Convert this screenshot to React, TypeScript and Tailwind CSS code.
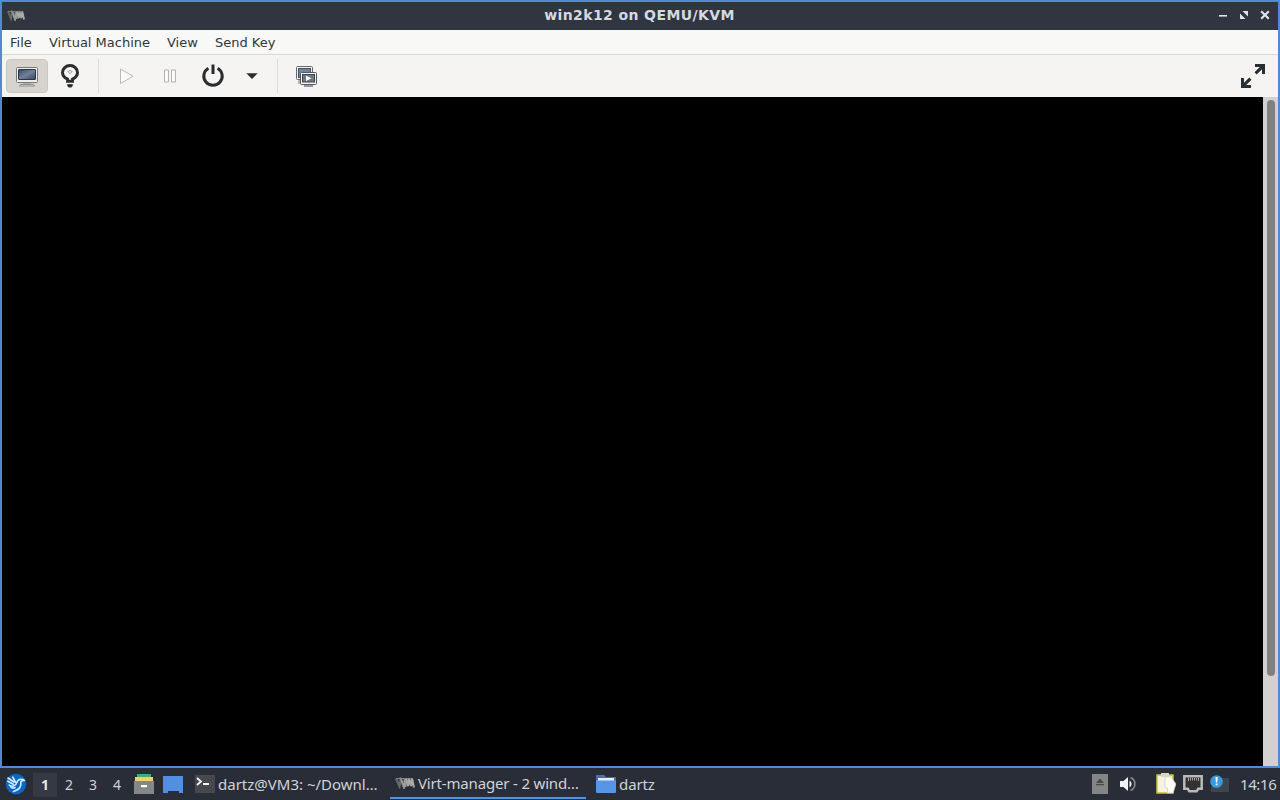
import type { ReactNode } from 'react'

const MENUS = [
  { label: 'File', cls: 'w-[39px]' },
  { label: 'Virtual Machine', cls: 'w-[118px]' },
  { label: 'View', cls: 'w-[48px]' },
  { label: 'Send Key', cls: 'w-[76px]' },
]

const DESKTOPS = ['1', '2', '3', '4']

function VmLogo({ className }: { className: string }) {
  return (
    <svg viewBox="0 0 20 12" className={className} fill="none">
      <path d="M1 1.5 L4.5 9.5 L5.5 2 L8.5 9.5 L9.5 2" stroke="#66686a" strokeWidth="2.2" />
      <path d="M6 2 L9 10 L10.5 2 V10" stroke="#9b9b99" strokeWidth="2" />
      <path d="M11 1.500 L13 9 L14 1.500 L16 9 L17 1.500 L19 10.500" stroke="#aaaaa7" strokeWidth="2" />
      <path d="M1 1.500 H18" stroke="#858685" strokeWidth="1" />
    </svg>
  )
}

function TitleBar() {
  return (
    <header className="flex h-[28px] shrink-0 items-center bg-[#30353f] pr-[8px] pl-[5px]">
      <div className="flex w-[54px] items-center pb-[2px]">
        <VmLogo className="h-[11px] w-[18px]" />
      </div>
      <h1 className="flex-1 pb-[2px] text-center text-[14px] leading-none font-bold tracking-[0.4px] text-[#d3dae3]">win2k12 on QEMU/KVM</h1>
      <div className="flex w-[52px] items-center justify-between pb-[2px]">
        <svg width="10" height="10" viewBox="0 0 10 10">
          <path d="M1 5h8v1.6H1z" fill="#dbe4ef" />
        </svg>
        <svg width="10" height="10" viewBox="0 0 10 10" fill="#dbe4ef">
          <path d="M3.500 1H9v5.500zM1 3.500V9h5.500z" />
        </svg>
        <svg width="10" height="10" viewBox="0 0 10 10">
          <path d="M1.200 1.200l7.600 7.600M8.800 1.200L1.200 8.800" stroke="#dbe4ef" strokeWidth="2.100" />
        </svg>
      </div>
    </header>
  )
}

function MenuBar() {
  return (
    <nav className="flex h-[25px] shrink-0 items-center border-b border-[#dcdad7] bg-[#f8f8f7] pl-[8px] text-[13px] text-[#30363a]">
      {MENUS.map((m) => (
        <button key={m.label} className={`${m.cls} shrink-0 text-left leading-none whitespace-nowrap`}>
          {m.label}
        </button>
      ))}
    </nav>
  )
}

function MonitorIcon() {
  return (
    <svg width="24" height="24" viewBox="0 0 24 24">
      <defs>
        <linearGradient id="screen" x1="0" y1="0" x2="1" y2="1">
          <stop offset="0" stopColor="#344765" />
          <stop offset="0.5" stopColor="#71819a" />
          <stop offset="1" stopColor="#33435c" />
        </linearGradient>
      </defs>
      <rect x="1.5" y="3.5" width="21" height="15" rx="1" fill="#eeeeec" stroke="#777975" />
      <rect x="3.5" y="5.5" width="17" height="10" rx=".5" fill="url(#screen)" stroke="#273449" />
      <path d="M8 19h8v1.500H8z" fill="#b4b5b1" />
      <path d="M5.500 20.500h13l1 1.500h-15z" fill="#e8e8e5" stroke="#777975" strokeWidth=".8" />
    </svg>
  )
}

function BulbIcon() {
  return (
    <svg width="24" height="26" viewBox="0 0 24 26" fill="none" stroke="#2a2e30">
      <path d="M9.500 18.200v-2C6.400 14.700 4.500 12.400 4.500 9.500a7.500 7 0 0 1 15 0c0 2.900-1.900 5.200-5 6.700v2z" strokeWidth="3" />
      <path d="M9.700 8.500l2.300 2.200 2.300-2.200-2.300-1z" stroke="#85888a" strokeWidth=".8" />
      <path d="M9.500 21.700h5l-1 2.300h-3z" fill="#2a2e30" strokeWidth="1" />
    </svg>
  )
}

function PowerIcon() {
  return (
    <svg width="24" height="24" viewBox="0 0 24 24" fill="none" stroke="#2a2e30" strokeWidth="3">
      <path d="M7.400 4.200a9.200 9.200 0 1 0 9.200 0M12 .4v9.600" />
    </svg>
  )
}

function SnapshotIcon() {
  return (
    <svg width="24" height="24" viewBox="0 0 24 24">
      <rect x="2.500" y="2.500" width="16" height="13" rx="1" fill="#f2f2f0" stroke="#626970" />
      <rect x="4.500" y="4.500" width="12" height="9" fill="#71839a" stroke="#465261" />
      <path d="M4 17h3M4 19h3" stroke="#73777a" />
      <rect x="6.500" y="8.500" width="16" height="12" rx="1" fill="#f2f2f0" stroke="#555b60" />
      <rect x="8.500" y="10.500" width="12" height="7.500" fill="#707a84" stroke="#3c4653" />
      <path d="M12 11.700l5.500 2.600-5.500 2.600z" fill="#fff" />
      <path d="M10 22h9" stroke="#77797b" strokeWidth="1.500" />
    </svg>
  )
}

function ToolBar() {
  return (
    <div className="flex h-[42px] shrink-0 items-center bg-[#f5f4f2]">
      <button className="ml-[4px] flex h-[34px] w-[42px] items-center justify-center rounded-[4px] border border-[#cdc7c2] bg-[#d7d3cf]">
        <MonitorIcon />
      </button>
      <button className="flex h-[34px] w-[44px] items-center justify-center">
        <BulbIcon />
      </button>
      <div className="ml-[6px] h-[34px] w-px bg-[#e0dedb]" />
      <button className="ml-[5px] flex h-[34px] w-[44px] items-center justify-center">
        <svg width="24" height="24" viewBox="0 0 24 24" fill="#fbfbfa" stroke="#bcbab7">
          <path d="M6.500 5v14.500L19 12.200z" />
        </svg>
      </button>
      <button className="flex h-[34px] w-[43px] items-center justify-center">
        <svg width="24" height="24" viewBox="0 0 24 24" fill="#fbfbfa" stroke="#b5b3b0">
          <path d="M6.500 6h4v12h-4zM13.500 6h4v12h-4z" />
        </svg>
      </button>
      <button className="flex h-[34px] w-[43px] items-center justify-center">
        <PowerIcon />
      </button>
      <button className="flex h-[34px] w-[36px] items-center justify-center">
        <svg width="12" height="6" viewBox="0 0 12 6">
          <path d="M.3.200h11.400L6 6z" fill="#2a2e30" />
        </svg>
      </button>
      <div className="ml-[7px] h-[34px] w-px bg-[#e0dedb]" />
      <button className="ml-[6px] flex h-[34px] w-[44px] items-center justify-center">
        <SnapshotIcon />
      </button>
      <button className="mr-[13px] ml-auto">
        <svg width="24" height="24" viewBox="0 0 24 24" fill="#2a2e30">
          <path d="M14 0h10v10h-3V5.200l-5.300 5.300-2.200-2.200L18.800 3H14zM0 14h3v4.800l5.300-5.300 2.200 2.200L5.200 21H10v3H0z" />
        </svg>
      </button>
    </div>
  )
}

function TaskItem({ icon, label, className }: { icon: ReactNode; label: string; className: string }) {
  return (
    <button className={`flex h-[30px] shrink-0 items-center whitespace-nowrap ${className}`}>
      {icon}
      <span>{label}</span>
    </button>
  )
}

function BirdIcon() {
  return (
    <svg width="22" height="22" viewBox="0 0 22 22">
      <circle cx="11" cy="11" r="10.300" fill="#0868c4" />
      <path
        d="M3 5l6 4M2.800 8.200l5.500 3M7.800 4.200l2.700 5M4.200 12c1.500 1.500 4 1.500 5.800.2 2-1.500 1.500-4.700 4.500-5.700 2-.6 3.500-.3 5 1-3-.3-4 .7-3.700 3 .5 4-2.300 6.500-7.300 8M5.500 13c.5 2 2.500 2.500 4.500 1.700"
        fill="none"
        stroke="#d9ecfb"
        strokeWidth="1.600"
        strokeLinecap="round"
        strokeLinejoin="round"
      />
    </svg>
  )
}

function FolderIcon() {
  return (
    <svg width="20" height="18" viewBox="0 0 20 18">
      <path d="M0 0h8l2 2h10v14H0z" fill="#4c6fa8" />
      <path d="M2 3h16v3H2z" fill="#e4edf7" />
      <path d="M0 5.500h20V17a1 1 0 0 1-1 1H1a1 1 0 0 1-1-1z" fill="#5795e6" />
    </svg>
  )
}

function TrayIcons() {
  return (
    <>
      <svg className="ml-auto shrink-0" width="16" height="20" viewBox="0 0 16 20">
        <path d="M0 0h16v20H0z" fill="#858585" />
        <path d="M8 4.500l4 4.500H4zM4 10h8v1.300H4z" fill="#484a4c" />
      </svg>
      <svg className="ml-[12px] shrink-0" width="17" height="16" viewBox="0 0 17 16">
        <path d="M0 5h3.500L8 1v14l-4.500-4H0z" fill="#f2f3f4" />
        <path d="M9.500 4.500a4 4 0 0 1 0 7z" fill="#f2f3f4" />
        <path d="M10.500 1.500a7 7 0 0 1 0 13" fill="none" stroke="#858990" strokeWidth="1.600" />
      </svg>
      <svg className="ml-[19px] shrink-0" width="20" height="22" viewBox="0 0 20 22">
        <path d="M1 2h16v18H1z" fill="#f5f4df" stroke="#c9c431" strokeWidth="1.500" />
        <path d="M5 0h8v4H5z" fill="#d7d7cf" />
        <path d="M9 4h6l5 7-3 9h-6l1-4-3-2z" fill="#fffff8" stroke="#c9c9b9" strokeWidth=".7" />
      </svg>
      <svg className="ml-[7px] shrink-0" width="20" height="18" viewBox="0 0 20 18">
        <path d="M1.300 1.300h17.400v12.500h-3.500l-1.500 2.500H6.300L4.800 13.800H1.300z" fill="#33312f" stroke="#b9b9b9" strokeWidth="2.500" />
        <path d="M5.500 3v3M7.500 3v2.500M9.500 3v2.500M11.500 3v2.500M13.500 3v2.500M15.500 3v3" stroke="#c5c5c5" strokeWidth=".8" />
      </svg>
      <svg className="ml-[7px] shrink-0" width="19" height="20" viewBox="0 0 19 20">
        <path d="M7 4h12v14H1v-5z" fill="#3d454f" />
        <circle cx="6.500" cy="7.500" r="6.300" fill="#3a9bdc" />
        <path d="M5.500 3h2.200l-.4 5.500H5.900zM5.700 9.500h1.800v1.800H5.700z" fill="#fff" />
      </svg>
    </>
  )
}

function Panel() {
  return (
    <footer className="flex h-[32px] shrink-0 items-center bg-[#292d38] pr-[4px] pl-[5px] font-['Noto_Sans',sans-serif] text-[15px] leading-none text-[#cfd3d9]">
      <BirdIcon />
      <div className="ml-[6px] flex pt-px">
        {DESKTOPS.map((d, i) => (
          <button key={d} className={`flex h-[24px] w-[24px] items-center justify-center text-[14px] ${i === 0 ? 'bg-[#343944] font-bold text-[#e3e5e8]' : ''}`}>
            {d}
          </button>
        ))}
      </div>
      <svg className="ml-[5px] shrink-0" width="20" height="22" viewBox="0 0 20 22">
        <path d="M3 1h14v4H3z" fill="#3eae78" />
        <path d="M1 4h18v4H1z" fill="#efd06d" />
        <path d="M0 8h20v13H0z" fill="#858786" />
        <path d="M7 12h6v2.200H7z" fill="#fff" />
      </svg>
      <svg className="mt-[2px] ml-[9px] shrink-0" width="20" height="18" viewBox="0 0 20 18">
        <path d="M0 0h20v17h-4v-2H5v2H0z" fill="#508fe2" />
      </svg>
      <TaskItem
        className="ml-[12px] w-[195px] gap-[3px]"
        label="dartz@VM3: ~/Downl…"
        icon={
          <svg width="20" height="18" viewBox="0 0 20 18">
            <path d="M0 0h20v18H0z" fill="#47484b" />
            <path d="M2 3l4 3.500L2 10M8 9h6" fill="none" stroke="#f3f3f3" strokeWidth="1.800" />
          </svg>
        }
      />
      <TaskItem
        className="w-[196px] gap-[3px] border-b-2 border-[#5294e2] pl-[5px] tracking-[-0.17px]"
        label="Virt-manager - 2 wind…"
        icon={<VmLogo className="h-[12px] w-[20px]" />}
      />
      <TaskItem className="ml-[10px] gap-[3px] tracking-[-0.1px]" label="dartz" icon={<FolderIcon />} />
      <TrayIcons />
      <span className="ml-[11px] w-[36px] tracking-[-0.4px] whitespace-nowrap">14:16</span>
    </footer>
  )
}

export default function App() {
  return (
    <div className="flex h-[800px] w-[1280px] flex-col overflow-hidden bg-[#292d38] font-['DejaVu_Sans',sans-serif]">
      <div className="flex h-[768px] shrink-0 flex-col border-2 border-[#5289d5]">
        <TitleBar />
        <MenuBar />
        <ToolBar />
        <main className="flex min-h-0 flex-1 bg-black">
          <div className="flex-1" />
          <div className="w-[15px] bg-[#d2d1cf] pt-[3px] pl-[4px]">
            <div className="h-[576px] w-[8px] rounded-full bg-[#808080]" />
          </div>
        </main>
      </div>
      <Panel />
    </div>
  )
}
